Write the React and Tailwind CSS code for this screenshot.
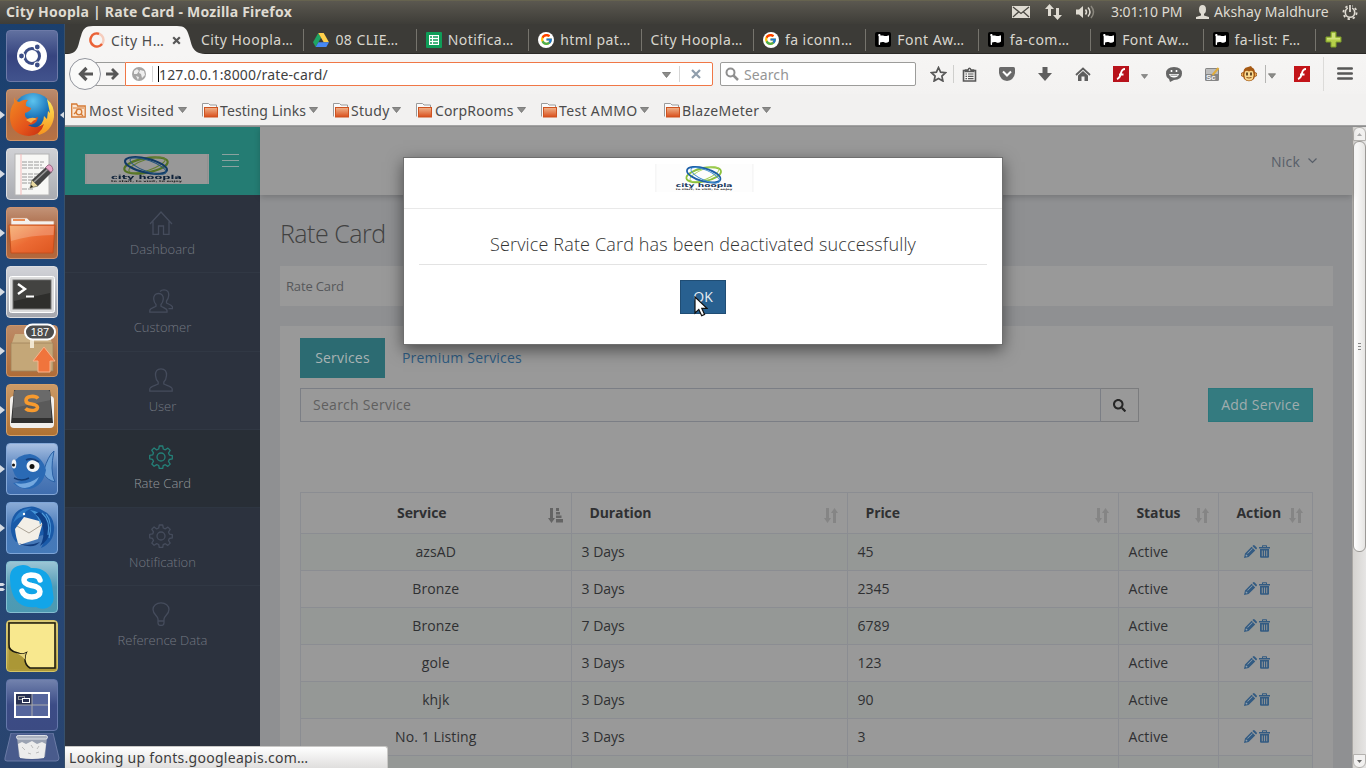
import React from "react";
import { FcGoogle } from "react-icons/fc";
import { FaFlag, FaSearch } from "react-icons/fa";

/* ---------- shared bits ---------- */

function Caret({ className = "" }) {
  return (
    <svg width="9" height="6" viewBox="0 0 9 6" className={className}>
      <path d="M.5 .5h8L4.5 5.5z" fill="#8d8d8b" stroke="#6f6f6d" strokeWidth=".8" />
    </svg>
  );
}

function Logo({ className }) {
  return (
    <svg viewBox="0 0 124 30" preserveAspectRatio="none" className={className}>
      <rect width="124" height="30" fill="#fdfdfd" />
      <path d="M1 0V30M122.5 0V30" stroke="#f2f2f2" />
      <g fill="none">
        <ellipse cx="61" cy="11.500" rx="22" ry="7.200" transform="rotate(-10 61 11.500)" stroke="#8cc03c" strokeWidth="2.200" />
        <ellipse cx="62" cy="11" rx="19" ry="5.500" transform="rotate(-18 62 11)" stroke="#a4d158" strokeWidth="1.100" />
        <ellipse cx="61" cy="11.500" rx="21.500" ry="7" transform="rotate(13 61 11.500)" stroke="#1c5fa8" strokeWidth="2.100" />
        <ellipse cx="63" cy="12" rx="19" ry="5.500" transform="rotate(20 63 12)" stroke="#3f8fd0" strokeWidth="1" />
      </g>
      <text x="26" y="25" textLength="71" lengthAdjust="spacingAndGlyphs" fontFamily="DejaVu Sans" fontWeight="700" fontSize="5.600" fill="#17375e">city hoopla</text>
      <text x="26" y="27.800" textLength="71" lengthAdjust="spacingAndGlyphs" fontFamily="DejaVu Sans" fontWeight="700" fontSize="2.400" fill="#222">to start, to visit, to enjoy</text>
    </svg>
  );
}

/* ---------- system panel ---------- */

function SystemPanel() {
  return (
    <div className="flex h-6 shrink-0 items-center border-t border-[#66634f] bg-linear-to-b from-[#5b5850] to-[#3e3d38] pl-1.5 text-[#dfdbd2]">
      <span className="w-[500px] pb-0.5 text-[14px] leading-none font-bold tracking-[0.23px] whitespace-nowrap">City Hoopla | Rate Card - Mozilla Firefox</span>
      <div className="ml-auto flex items-center pb-px">
        <svg width="18" height="12" viewBox="0 0 18 12" className="mr-[15px]">
          <rect width="18" height="12" fill="#dfdbd2" />
          <path d="M1 1l8 6.500L17 1M1 11l5.500-5M17 11l-5.500-5" stroke="#4a4842" strokeWidth="1.300" fill="none" />
        </svg>
        <svg width="17" height="16" viewBox="0 0 17 16" className="mr-3.5" fill="#dfdbd2">
          <path d="M4.500 0L9 5H6v7H3V5H0zM12.500 16L8 11h3V4h3v7h3z" />
        </svg>
        <svg width="20" height="14" viewBox="0 0 20 14" className="mr-[15px]">
          <path d="M0 4.500h3L7 1v12L3 9.500H0z" fill="#dfdbd2" />
          <path d="M9.500 4.500q2 2.500 0 5M12 2.500q4 4.500 0 9" stroke="#dfdbd2" strokeWidth="1.500" fill="none" />
          <path d="M15 1q5 6 0 12" stroke="#8a877e" strokeWidth="1.500" fill="none" />
        </svg>
        <span className="w-[85px] text-[14px] leading-none tracking-[-0.1px] whitespace-nowrap">3:01:10 PM</span>
        <svg width="13" height="14" viewBox="0 0 13 14" fill="#dfdbd2" className="mr-[5px]">
          <ellipse cx="6.500" cy="4.500" rx="3.500" ry="4.500" />
          <path d="M5 8h3v2.500l5 1.500v2H0v-2l5-1.500z" />
        </svg>
        <span className="w-[128px] text-[14px] leading-none tracking-[0.06px] whitespace-nowrap">Akshay Maldhure</span>
        <svg width="16" height="16" viewBox="0 0 16 16" className="mr-2" fill="none" stroke="#dfdbd2">
          <circle cx="8" cy="8.500" r="4.700" strokeWidth="1.600" />
          <circle cx="8" cy="8.500" r="6.600" strokeWidth="1.800" strokeDasharray="2.400 2.784" />
          <path d="M8 0v8" strokeWidth="4" stroke="#4c4a44" />
          <path d="M8 1v7" strokeWidth="1.800" />
        </svg>
      </div>
    </div>
  );
}

/* ---------- launcher ---------- */

function UbuntuIcon() {
  return (
    <g>
      <circle cx="26" cy="26" r="15" fill="#fff" />
      <circle cx="26" cy="26" r="7.500" fill="none" stroke="#3c4d86" strokeWidth="3" />
      <g fill="#3c4d86" stroke="#fff" strokeWidth="1.200">
        <circle cx="15.500" cy="26" r="3" />
        <circle cx="31.300" cy="17" r="3" />
        <circle cx="31.300" cy="35" r="3" />
      </g>
    </g>
  );
}

function FirefoxIcon() {
  return (
    <g>
      <defs>
        <radialGradient id="ffGlobe" cx=".5" cy=".2" r=".8"><stop offset="0" stopColor="#5cc3ee" /><stop offset=".5" stopColor="#1e78bd" /><stop offset="1" stopColor="#123a80" /></radialGradient>
        <linearGradient id="ffFox" x1="0" y1="0" x2="1" y2="1"><stop offset="0" stopColor="#f28b22" /><stop offset=".6" stopColor="#e4541b" /><stop offset="1" stopColor="#c52d10" /></linearGradient>
        <linearGradient id="ffTail" x1="0" y1="0" x2="0" y2="1"><stop offset="0" stopColor="#ffe95c" /><stop offset="1" stopColor="#f7941d" /></linearGradient>
      </defs>
      <circle cx="27" cy="24" r="20" fill="url(#ffGlobe)" />
      <path d="M41 10q8 7 7 18-2 14-15 18l-5-6q10-4 10-13l3 3 1-8 2 2z" fill="url(#ffTail)" />
      <path d="M8 8q1 4 5 5 5-3 9-2-3 3-2 6l5 2q0 3-6 5-1 5 4 6 5 0 9-2-1 8-10 8 8 5 16-1-3 11-15 12Q5 46 4 29 4 18 8 14z" fill="url(#ffFox)" />
      <path d="M20 31q6-4 11-1-4 1-6 4z" fill="#f9b04a" />
    </g>
  );
}

function EditorIcon() {
  return (
    <g>
      <rect x="9" y="6" width="34" height="41" fill="#f7f7f5" stroke="#b4b4b4" />
      <path d="M15 6v41" stroke="#f3b9b9" />
      <path d="M16 14h22M16 17h20M16 20h22M16 26h18M16 29h21M16 32h17M16 35h19M16 41h12" stroke="#9a9a9a" strokeWidth="1" strokeDasharray="5 1" />
      <path d="M24 40l2-8 6 6z" fill="#ead9a0" stroke="#55553a" strokeWidth=".6" />
      <path d="M26 32L40 19l6 5L32 38z" fill="#444" />
      <path d="M28 34L42 21" stroke="#999" strokeWidth="1.500" />
      <path d="M39.500 19.500l2.500-2.500q4-1 5 5l-2 2.500z" fill="#e8a6c8" stroke="#8d5a77" strokeWidth=".8" />
      <path d="M24 40l1.500-3 1.500 1.800z" fill="#222" />
    </g>
  );
}

function FilesIcon() {
  return (
    <g>
      <defs><linearGradient id="fold" x1="0" y1="0" x2="1" y2="1"><stop offset="0" stopColor="#f5a25a" /><stop offset=".5" stopColor="#ec6b34" /><stop offset="1" stopColor="#dd5620" /></linearGradient></defs>
      <path d="M5 11h16l3 3h24v8H5z" fill="#f4f1ee" stroke="#c98d6c" strokeWidth=".7" />
      <path d="M7 13h12" stroke="#e98d55" strokeWidth="2" />
      <path d="M3 18h46l-2 28H5z" fill="url(#fold)" stroke="#c64f1c" />
      <path d="M4 19h44l-.5 9Q24 28 5 34z" fill="#fff" opacity=".22" />
    </g>
  );
}

function TerminalIcon() {
  return (
    <g>
      <rect x="3.500" y="10.500" width="45" height="36" rx="2" fill="#dcdcdc" stroke="#fff" />
      <rect x="7" y="14" width="38" height="29" fill="#2e2e2c" stroke="#777" />
      <path d="M8 15h36v12L8 35z" fill="#fff" opacity=".1" />
      <path d="M12 18l7 5-7 5" stroke="#fff" strokeWidth="2.400" fill="none" />
      <path d="M20 30.500h8" stroke="#fff" strokeWidth="2" />
    </g>
  );
}

function UpdaterIcon() {
  return (
    <g>
      <path d="M9 9h34l3 9H6z" fill="#cbb083" />
      <path d="M5 18h42v28H5z" fill="#c4a778" stroke="#a1845a" strokeWidth=".8" />
      <path d="M24 9h4v14h-4z" fill="#f0e6d0" />
      <path d="M38 22l11 14h-5v11H32V36h-5z" fill="#f0743c" stroke="#f8b28c" />
      <rect x="19" y="-.500" width="30" height="15" rx="7.500" fill="#4d4d4d" stroke="#fff" strokeWidth="2" />
      <text x="34" y="11" textAnchor="middle" fontFamily="Liberation Sans" fontSize="11" fill="#fff">187</text>
    </g>
  );
}

function SublimeIcon() {
  return (
    <g>
      <rect x="4" y="12" width="44" height="32" rx="4" fill="#f1efec" />
      <path d="M8 6h36l3 33H5z" fill="#2f2f2f" />
      <path d="M10 6h32q2 0 2 2l1.500 26H6.500L8 8q0-2 2-2z" fill="#5a5a5a" />
      <path d="M10 6h32q2 0 2 2l.500 8L7.500 24V8q.500-2 2.500-2z" fill="#fff" opacity=".1" />
      <path d="M32 14.500q-2-2.500-7-2-5 .5-5 4 0 3 5.500 3.500 6 1 6 3.500-.5 3-5.500 3-4.500 0-6.500-2" stroke="#f79a2e" strokeWidth="3.600" fill="none" />
    </g>
  );
}

function BluefishIcon() {
  return (
    <g>
      <path d="M38 27q4-14 10-19-2 10-2 17 0 8 3 14-8-2-11-8z" fill="#6fa2d8" stroke="#2b62a6" />
      <path d="M6 22q6-11 18-11 12 2 16 16-3 17-17 19-10 0-16-6 5 0 8-3-8-3-9-15z" fill="#2a6ab5" />
      <path d="M9 40q12 3 24-6-4 10-14 11-6 0-10-5z" fill="#74a8df" />
      <path d="M8 35q8 4 15 0" stroke="#123c77" strokeWidth="1.500" fill="none" />
      <ellipse cx="27" cy="23" rx="6.500" ry="6" fill="#f4f6f8" />
      <circle cx="26" cy="23.500" r="2.500" fill="#111" />
      <ellipse cx="8" cy="21" rx="2.300" ry="4.500" fill="#f4f6f8" />
      <circle cx="7.500" cy="22" r="1.500" fill="#111" />
      <path d="M20 17q6-3 13 2" stroke="#173f7b" strokeWidth="1.800" fill="none" />
    </g>
  );
}

function ThunderbirdIcon() {
  return (
    <g>
      <path d="M5 24Q6 7 22 5q6-2 14 3 11 5 12 16 1 16-13 22 5-8 2-13L10 40q-6-7-5-16z" fill="#1a5aa8" />
      <path d="M9 27l9-12 19 5-5 17-19 6q-3-6-4-16z" fill="#f3efe7" />
      <path d="M11 24l12 7 14-9" stroke="#aaa295" fill="none" />
      <path d="M7 21Q12 6 26 6q-8 3-8 8-6 1-11 7z" fill="#2f7ac4" />
      <path d="M24 8q10 1 14 9l-4 6q-1-9-10-15z" fill="#4796d8" />
      <path d="M33 10q13 6 11 20-2 9-10 14 5-9 3-18-1-9-8-14z" fill="#0e3f86" />
      <path d="M36 11q9 8 6 22M40 12q7 9 3 24" stroke="#4f9bda" strokeWidth="1.200" fill="none" />
      <circle cx="18" cy="12" r="1.200" fill="#fff" />
      <path d="M12 41q10 4 22-1-7 8-22 1z" fill="#143d7c" />
    </g>
  );
}

function SkypeIcon() {
  return (
    <g>
      <path d="M4 18Q3 5 17 4q5 0 8 3 18-1 21 17l1 8q3 11-6 15-6 2-11-1Q11 48 6 31 4 25 4 18z" fill="#12a5e8" />
      <path d="M34 19q-1-5-9-5-7 .5-7 5 0 4 7.500 5.500 8.500 1.500 8.500 6 0 5-8 5.500-8 0-10-6" fill="none" stroke="#fff" strokeWidth="5.500" strokeLinecap="round" />
    </g>
  );
}

function NotesIcon() {
  return (
    <g>
      <path d="M2 2h47v47H3z" fill="#ab9736" />
      <path d="M3 3h46v45H24q-5-3-5-9 0-4 1-6-4 2-8 0Q2 31 3 24z" fill="#f8e88e" stroke="#1d1b10" strokeWidth="1.600" />
      <path d="M10 33q6 2 10 0-2 4 0 8-3-5-10-8z" fill="#e5d47b" />
    </g>
  );
}

function WorkspaceIcon() {
  return (
    <g>
      <rect x="9" y="14" width="34" height="24" fill="#55659c" stroke="#fff" strokeWidth="2" />
      <rect x="10" y="15" width="16" height="11" fill="#293152" />
      <path d="M26 15v22M10 26h32" stroke="#aaa" />
      <rect x="12.500" y="17.500" width="6" height="3" fill="none" stroke="#999" />
      <rect x="16.500" y="19.500" width="7" height="4" fill="#293152" stroke="#fff" />
    </g>
  );
}

const launcher = [
  { Icon: UbuntuIcon, bg: "bg-linear-to-b from-[#61709f] via-[#36447f] to-[#42538d] border-[#6d7aa8]" },
  { Icon: FirefoxIcon, bg: "bg-linear-to-b from-[#bb8b6d] via-[#a86d4b] to-[#b87243] border-[#d0966c]", run: true, focus: true },
  { Icon: EditorIcon, bg: "bg-linear-to-b from-[#d0d1d5] to-[#aaacb1] border-[#dedfe2]", run: true },
  { Icon: FilesIcon, bg: "bg-linear-to-b from-[#c29276] via-[#a4613d] to-[#b4683c] border-[#cf9370]", run: true },
  { Icon: TerminalIcon, bg: "bg-linear-to-b from-[#d2d3d8] to-[#a5a7ae] border-[#dcdde1]", run: true },
  { Icon: UpdaterIcon, bg: "bg-linear-to-b from-[#bd8b66] to-[#af6c38] border-[#cc956a]", run: true },
  { Icon: SublimeIcon, bg: "bg-linear-to-b from-[#cc9a66] to-[#b07233] border-[#d5a069]", run: true },
  { Icon: BluefishIcon, bg: "bg-linear-to-b from-[#a8c0e2] via-[#5581bd] to-[#3f6dae] border-[#85a8d8]", run: true },
  { Icon: ThunderbirdIcon, bg: "bg-linear-to-b from-[#8aabd6] via-[#4678b8] to-[#457ab9] border-[#7ea5d8]", run: true },
  { Icon: SkypeIcon, bg: "bg-linear-to-b from-[#9bc5d5] via-[#4f9bb7] to-[#4c9ab2] border-[#85bfd1]", run: true, two: true },
  { Icon: NotesIcon, bg: "bg-linear-to-b from-[#d9cb7d] to-[#ad9838] border-[#d6c566]" },
  { Icon: WorkspaceIcon, bg: "bg-linear-to-b from-[#7282ad] via-[#3c4c86] to-[#3c4b83] border-[#6577aa]" },
];

function Launcher() {
  return (
    <nav className="flex w-[65px] shrink-0 flex-col gap-[7px] border-r border-[#38506a] bg-linear-to-b from-[#1b3f6d] via-[#234a7c] to-[#29446f] pt-1.5">
      {launcher.map(({ Icon, bg, run, focus, two }, i) => (
        <div key={i} className="flex h-[52px] shrink-0 items-center">
          <div className="flex w-1.5 shrink-0 flex-col gap-0.5">
            {run && !two && <svg width="5" height="8" viewBox="0 0 5 8"><path d="M0 0l5 4-5 4z" fill="#d5dbe3" /></svg>}
            {two && <svg width="5" height="8" viewBox="0 0 5 8"><path d="M0 0h3l2 1.500L3 3H0zM0 5h3l2 1.500L3 8H0z" fill="#d5dbe3" /></svg>}
          </div>
          <div className={"h-[52px] w-[52px] shrink-0 rounded-[4px] border " + bg}>
            <svg width="50" height="50" viewBox="1 1 50 50" className="overflow-visible"><Icon /></svg>
          </div>
          {focus && <svg width="5" height="8" viewBox="0 0 5 8" className="ml-0.5"><path d="M5 0L0 4l5 4z" fill="#d5dbe3" /></svg>}
        </div>
      ))}
      <svg width="56" height="29" viewBox="0 0 56 29" className="-mt-[5px] ml-1 shrink-0">
        <path d="M7 0h42l6 25q0 3-3 3H3q-3 0-2-3z" fill="#495b8c" stroke="#6b7ba6" />
        <path d="M13 4h30l-2 20H15z" fill="#9aa2b2" />
        <path d="M14 11l4-2 4 2 6-3 5 3 5-2 4 2-2 14q-12 2-24 0z" fill="#ececec" />
        <path d="M18 14l3 3M27 12l2 3M24 20l3 1M35 13l-2 3M32 20l3-1" stroke="#bcbcbc" fill="none" />
        <rect x="12.500" y="2.500" width="31" height="3.500" rx="1.700" fill="#aab1be" stroke="#dde1e8" />
      </svg>
    </nav>
  );
}

/* ---------- browser chrome ---------- */

function DriveIcon() {
  return (
    <svg width="16" height="14" viewBox="0 0 16 14">
      <path d="M5.300 0L8 4.700 2.700 14 0 9.300z" fill="#1fa463" />
      <path d="M5.300 0h5.400L16 9.300h-5.300z" fill="#ffd04b" />
      <path d="M5.400 9.300H16L13.300 14H2.700z" fill="#4688f4" />
    </svg>
  );
}

function SheetIcon() {
  return (
    <svg width="16" height="16" viewBox="0 0 16 16">
      <rect width="16" height="16" rx="1" fill="#0f9d58" />
      <rect x="3" y="3" width="10" height="10" fill="#fff" />
      <path d="M4 5h2M7 5h5M4 8h2M7 8h5M4 11h2M7 11h5" stroke="#0f9d58" strokeWidth="1.500" />
    </svg>
  );
}

function GoogleIcon() {
  return (
    <span className="flex h-4 w-4 items-center justify-center rounded-full bg-white"><FcGoogle size={13} /></span>
  );
}

function FlagIcon() {
  return (
    <span className="flex h-[15px] w-4 items-center justify-center rounded-[2px] bg-black"><FaFlag size={11} color="#fff" /></span>
  );
}

const tabs = [
  { label: "City Hoopla…" },
  { label: "08 CLIE…", Icon: DriveIcon },
  { label: "Notifica…", Icon: SheetIcon },
  { label: "html pat…", Icon: GoogleIcon },
  { label: "City Hoopla…" },
  { label: "fa iconn…", Icon: GoogleIcon },
  { label: "Font Aw…", Icon: FlagIcon },
  { label: "fa-com…", Icon: FlagIcon },
  { label: "Font Aw…", Icon: FlagIcon },
  { label: "fa-list: F…", Icon: FlagIcon },
];

function TabStrip() {
  return (
    <div className="flex h-[30px] shrink-0 border-b border-[#2b2a27] bg-[#3c3b37]">
      <div className="relative h-[30px] w-[127px] shrink-0">
        <svg width="140" height="30" viewBox="0 0 140 30" className="absolute top-0 left-0 z-10">
          <path d="M3 30C14 29 13 20 16 12 18 5 20 2 28 2h84c8 0 10 3 12 10 3 8 2 17 16 18z" fill="#f6f5f4" />
        </svg>
        <div className="relative z-20 flex h-full items-center pt-0.5 pl-6">
          <svg width="16" height="16" viewBox="0 0 16 16" fill="none" strokeWidth="2.400">
            <circle cx="8" cy="8" r="6.500" stroke="#f6cdbd" />
            <path d="M13 12A6.500 6.500 0 1 1 10 1.800" stroke="#ea6237" />
          </svg>
          <span className="ml-1.5 w-[61px] text-[14px] tracking-[0.5px] whitespace-nowrap text-[#4c4c4c]">City H…</span>
          <svg width="9" height="9" viewBox="0 0 9 9"><path d="M1.200 1.200l6.600 6.600M7.800 1.200L1.200 7.800" stroke="#575757" strokeWidth="2.200" /></svg>
        </div>
      </div>
      {tabs.map(({ label, Icon }, i) => (
        <div key={i} className="flex w-[112.4px] shrink-0 items-center gap-1.5 pt-0.5 pl-[9px]">
          {Icon && <Icon />}
          <span className="grow text-[14px] tracking-[0.45px] whitespace-nowrap text-[#d9d6ce]">{label}</span>
          <span className="h-[22px] w-px bg-[#76746d]" />
        </div>
      ))}
      <svg width="17" height="17" viewBox="0 0 17 17" className="mt-[7px] ml-[9px]">
        <path d="M6 1h5v5h5v5h-5v5H6v-5H1V6h5z" fill="#b5cf4a" stroke="#7e9f2a" />
        <path d="M7 2h3v5h5v1.500H2V7h5z" fill="#dbe88f" opacity=".7" />
      </svg>
    </div>
  );
}

function Slot({ className, children }) {
  return <div className={"flex shrink-0 items-center justify-center " + className}>{children}</div>;
}

function FlashIcon({ className }) {
  return (
    <svg width="16" height="16" viewBox="0 0 16 16">
      <rect width="16" height="16" className={className} />
      <path d="M12 3q-3 0-4 4-1 5-4 6M6 8.500h4.500" stroke="#fff" strokeWidth="1.900" fill="none" />
    </svg>
  );
}

function NavBar() {
  return (
    <div className="flex h-10 shrink-0 items-center bg-linear-to-b from-[#f6f5f4] to-[#f3f2f1]">
      <div className="z-10 ml-1 flex h-8 w-8 shrink-0 items-center justify-center rounded-full border border-[#92959d] bg-[#fafaf9]">
        <svg width="15" height="16" viewBox="0 0 15 16"><path d="M8.500 2L2.500 8l6 6M2.500 8H15" stroke="#575757" strokeWidth="3.200" fill="none" /></svg>
      </div>
      <div className="-ml-3 flex h-6 w-9 shrink-0 items-center justify-end border border-r-0 border-[#9b9b99] bg-[#f7f6f5] pr-1.5">
        <svg width="13" height="14" viewBox="0 0 13 14"><path d="M6 2l5 5-5 5M11 7H0" stroke="#575757" strokeWidth="2.800" fill="none" /></svg>
      </div>
      <div className="flex h-6 w-[588px] shrink-0 items-center rounded-r-[2px] border border-[#f07746] bg-white pl-1.5">
        <svg width="14" height="14" viewBox="0 0 14 14">
          <circle cx="7" cy="7" r="7" fill="#a5a5a5" />
          <path d="M2 4l3-2 2 2-2 3-3 0zM8 3l4 1 1 4-3 3-1-4-2-1zM4 9l3 1-1 3z" fill="#efefef" />
        </svg>
        <span className="ml-1.5 h-4 w-px bg-[#d6d6d6]" />
        <span className="ml-[5px] h-4 w-px bg-black" />
        <span className="grow pt-0.5 text-[14px] leading-none tracking-[0.15px] whitespace-nowrap text-[#3f3f3f]">127.0.0.1:8000/rate-card/</span>
        <Caret className="mt-0.5" />
        <span className="ml-2 h-4 w-px bg-[#d6d6d6]" />
        <svg width="10" height="10" viewBox="0 0 10 10" className="mr-[11px] ml-[11px]"><path d="M1 1l8 8M9 1L1 9" stroke="#8f9dab" strokeWidth="2.200" /></svg>
      </div>
      <div className="ml-[7px] flex h-6 w-[196px] shrink-0 items-center rounded-[2px] border border-[#9c9c9a] bg-white pl-1">
        <svg width="14" height="14" viewBox="0 0 14 14" fill="none" stroke="#8f8f8f"><circle cx="5.500" cy="5.500" r="4" strokeWidth="2" /><path d="M8.500 8.500l4.500 4.500" strokeWidth="2.500" /></svg>
        <span className="ml-[5px] pt-0.5 text-[14px] leading-none tracking-[0.1px] text-[#959595]">Search</span>
      </div>
      <Slot className="ml-[7px] w-[30px]">
        <svg width="17" height="16" viewBox="0 0 17 16"><path d="M8.500 1.500l2.100 4.600 5 .6-3.700 3.400 1 4.900-4.400-2.500L4.100 15l1-4.900L1.400 6.700l5-.6z" fill="none" stroke="#575757" strokeWidth="1.700" /></svg>
      </Slot>
      <span className="h-[18px] w-px bg-[#cfcfcd]" />
      <Slot className="w-[30px]">
        <svg width="15" height="15" viewBox="0 0 15 15"><path d="M3.500 3.500h-2V14h12V3.500h-2M3.500 4.500h8V3h-2.500Q7.500-.5 6 3H3.500z" fill="none" stroke="#575757" strokeWidth="1.600" /><path d="M3.500 7h1.500M6 7h5.500M3.500 9.300h1.500M6 9.300h5.500M3.500 11.600h1.500M6 11.600h5.500" stroke="#575757" strokeWidth="1.200" /></svg>
      </Slot>
      <Slot className="w-[46px]">
        <svg width="16" height="14" viewBox="0 0 16 14"><path d="M1.500 0h13Q16 0 16 1.500V6q-1 7-8 8-7-1-8-8V1.500Q0 0 1.500 0z" fill="#6a6a6a" /><path d="M4 4.500l4 4 4-4" stroke="#fff" strokeWidth="2" fill="none" /></svg>
      </Slot>
      <Slot className="w-[30px]">
        <svg width="14" height="14" viewBox="0 0 14 14"><path d="M4.500 0h5v6H14l-7 8-7-8h4.500z" fill="#5e5e5e" /></svg>
      </Slot>
      <Slot className="w-[46px]">
        <svg width="16" height="14" viewBox="0 0 16 14"><path d="M1 8l7-6.500L15 8" stroke="#5e5e5e" strokeWidth="1.800" fill="none" /><path d="M3 8.500L8 4l5 4.500V14H9.500V9.500h-3V14H3z" fill="#5e5e5e" /></svg>
      </Slot>
      <Slot className="w-[30px]"><FlashIcon className="fill-[#b8121b]" /></Slot>
      <Slot className="w-4 pt-1"><Caret className="h-[5px] w-[7px]" /></Slot>
      <Slot className="w-11">
        <svg width="16" height="15" viewBox="0 0 16 15"><path d="M8 0q8 0 8 6.500T8 13l-4 2-1-3Q0 10.500 0 6.500 0 0 8 0z" fill="#666" /><path d="M5.500 3v2M10.500 3v2" stroke="#fff" strokeWidth="1.600" /><path d="M3 7h10q-1 3.500-5 3.500T3 7z" fill="#fff" /><path d="M4.500 8.200h7" stroke="#666" strokeWidth=".8" /></svg>
      </Slot>
      <Slot className="w-8">
        <svg width="15" height="15" viewBox="0 0 15 15"><rect y="1" width="14" height="13" rx="1.500" fill="#858585" /><path d="M1 2h12v5H1z" fill="#bdbdbd" /><text x="1" y="12.500" fontFamily="Liberation Sans" fontWeight="700" fontSize="8" fill="#f2f2f2">Sc</text><path d="M7.500 8L13.500 1" stroke="#e0ac3b" strokeWidth="2" /></svg>
      </Slot>
      <Slot className="ml-[5px] w-8">
        <svg width="16" height="16" viewBox="0 0 16 16"><circle cx="2" cy="8.500" r="1.900" fill="#f0b45e" stroke="#8e4a12" strokeWidth=".8" /><circle cx="14" cy="8.500" r="1.900" fill="#f0b45e" stroke="#8e4a12" strokeWidth=".8" /><path d="M3 3.500q1-2.500 4-2.500l3-1 1 1.500q2 .5 2.500 2.500 1.500 5-.5 9-5 4.500-10 0-2-4 0-9.500z" fill="#a65a14" /><path d="M4 5.500q2-1.500 4 0 2-1.500 4 0 1.500 4-.2 7.500-3.800 3-7.600 0-1.700-3.500-.2-7.500z" fill="#f9d88e" /><path d="M6 6.500v3M10 6.500v3" stroke="#3a2008" strokeWidth="1.500" /><path d="M5.500 11.500q2.500 1 5 0" stroke="#8e4a12" fill="none" /></svg>
      </Slot>
      <span className="h-[18px] w-px bg-[#b5b5b3]" />
      <Slot className="w-3 pt-1"><Caret className="h-[6px] w-[8px]" /></Slot>
      <Slot className="ml-[3px] w-[42px]"><FlashIcon className="fill-[#c31419]" /></Slot>
      <span className="h-[34px] w-px bg-[#dcdbd9]" />
      <Slot className="w-[42px]">
        <svg width="16" height="14" viewBox="0 0 16 14"><path d="M1.200 1.500h13.600M1.200 6.500h13.600M1.200 11.500h13.600" stroke="#575757" strokeWidth="2.400" strokeLinecap="round" /></svg>
      </Slot>
    </div>
  );
}

function FolderIcon() {
  return (
    <svg width="16" height="15" viewBox="0 0 16 15">
      <defs><linearGradient id="bmFolder" x1="0" y1="0" x2="0" y2="1"><stop offset="0" stopColor="#f0b48c" /><stop offset="1" stopColor="#d94e1b" /></linearGradient></defs>
      <path d="M.5 13.500V.5h6l1.500 1.500h6.500v3" fill="#fafafa" stroke="#9b9b9b" />
      <rect x="2.500" y="4.500" width="13" height="9.500" fill="url(#bmFolder)" stroke="#ce5320" />
    </svg>
  );
}

function MostVisitedIcon() {
  return (
    <svg width="15" height="15" viewBox="0 0 15 15" fill="none" stroke="#d57a34">
      <path d="M.7 14V1h5l1 2h7.500v11z" fill="#fbe7d4" strokeWidth="1.300" />
      <path d="M2 5h11" />
      <circle cx="8" cy="9" r="2.800" strokeWidth="1.300" />
      <path d="M10 11l2 2M3 11l3-3" strokeWidth="1.300" />
    </svg>
  );
}

const bookmarks = [
  { label: "Most Visited", item: "w-[131px]", text: "w-[89px] ml-[3px] tracking-[0.4px]", Icon: MostVisitedIcon },
  { label: "Testing Links", item: "w-[131px]", text: "w-[89px] ml-0.5 tracking-[0.1px]", Icon: FolderIcon },
  { label: "Study", item: "w-[83px]", text: "w-[41px] ml-0.5 tracking-[0.3px]", Icon: FolderIcon },
  { label: "CorpRooms", item: "w-[125px]", text: "w-[82px] ml-[3px] tracking-[0.15px]", Icon: FolderIcon },
  { label: "Test AMMO", item: "w-[123px]", text: "w-[81px] ml-0.5 tracking-[0.35px]", Icon: FolderIcon },
  { label: "BlazeMeter", item: "w-[123px]", text: "w-[80px] ml-0.5 tracking-[0.3px]", Icon: FolderIcon },
];

function BookmarksBar() {
  return (
    <div className="flex h-8 shrink-0 items-center border-b border-[#a3a3a3] bg-[#f2f1f0] pt-px pl-1.5">
      {bookmarks.map(({ label, item, text, Icon }) => (
        <div key={label} className={"flex shrink-0 items-center " + item}>
          <Icon />
          <span className={"shrink-0 pt-px text-[14px] leading-none whitespace-nowrap text-[#4c4c4c] " + text}>{label}</span>
          <Caret />
        </div>
      ))}
    </div>
  );
}

/* ---------- application page ---------- */

const gearPath = "M10.300 1h3.400l.6 3 2 .8 2.600-1.700 2.300 2.300-1.700 2.600.9 2.100 2.900.5v3.300l-3 .6-.8 2 1.700 2.600-2.400 2.300-2.500-1.700-2.100.9-.5 2.900h-3.400l-.6-3-2-.9-2.600 1.700-2.300-2.300 1.700-2.600-.9-2-2.900-.6v-3.400l3-.5.8-2.100-1.700-2.500 2.300-2.400L7.700 4.900l2-.9z";

const Gear = () => (<><path d={gearPath} strokeLinejoin="round" /><circle cx="12" cy="12" r="4" /></>);
const Home = () => <path d="M1 13L12 1l11 12M4 10.500V23.500h5.500V15h5v8.500H20V10.500" />;
const User = () => <path d="M12 .8c4 0 5.800 2.700 5.500 6.700-.2 3-1.200 5.200-2.700 6.500v2c2.500 1.500 8.400 2.500 8.400 5v2.200H.8V21c0-2.500 5.900-3.500 8.400-5v-2C7.700 12.700 6.700 10.500 6.500 7.500 6.200 3.500 8 .8 12 .8z" />;
const Users = () => (
  <>
    <path d="M9.500 4.500c3.500 0 5 2.300 4.800 5.500-.2 2.600-1 4.300-2.300 5.500v1.700c2 1.300 6 2 6 4.300v1.700H.8v-1.700c0-2.300 4.200-3 6.200-4.300v-1.700C5.700 14.300 4.900 12.600 4.700 10c-.2-3.200 1.300-5.500 4.800-5.500z" />
    <path d="M11 2.500C12 1.400 13.500.8 15 .8c3.500 0 5 2.500 4.700 5.700-.2 2.500-1 4.300-2.200 5.500v2c2 1.200 6 2 6 4.200v1.500h-4" />
  </>
);
const Bulb = () => <path d="M9 17c0-3-5-4.500-5-9.500C4 3.500 7.500.8 12 .8s8 2.700 8 6.700c0 5-5 6.500-5 9.500M9 19v2q0 2.500 3 2.500t3-2.500v-4M9 17v3M9 19h6" />;

const menu = [
  { label: "Dashboard", Icon: Home },
  { label: "Customer", Icon: Users },
  { label: "User", Icon: User },
  { label: "Rate Card", Icon: Gear, active: true },
  { label: "Notification", Icon: Gear },
  { label: "Reference Data", Icon: Bulb },
];

function Sidebar() {
  return (
    <aside className="flex w-[195px] shrink-0 flex-col bg-[#2c323e]">
      <div className="flex h-[68px] shrink-0 items-start bg-[#247c73] pt-[27px] pl-5">
        <Logo className="h-[30px] w-[124px] brightness-[.6]" />
        <div className="ml-[13px] flex w-[17px] flex-col gap-[5px]">
          <span className="h-px bg-[#8ba29f]" />
          <span className="h-px bg-[#8ba29f]" />
          <span className="h-px bg-[#8ba29f]" />
        </div>
      </div>
      {menu.map(({ label, Icon, active }) => (
        <div key={label} className={"flex h-[78.300px] shrink-0 flex-col items-center border-b " + (active ? "border-[#2e3642] bg-[#282e36] pt-[15px]" : label === "Reference Data" ? "border-transparent pt-4" : "border-[#313844] pt-4")}>
          <svg width="24" height="24" viewBox="0 0 24 24" fill="none" strokeWidth="1.300" className={"mr-[3px] " + (active ? "stroke-[#248078]" : "stroke-[#454c5c]")}><Icon /></svg>
          <span className={"mt-[5px] text-[13px] leading-[19px] font-light " + (active ? "text-[#94979a]" : "text-[#727780]")}>{label}</span>
        </div>
      ))}
    </aside>
  );
}

function SortIcon({ active }) {
  return (
    <svg width="15" height="15" viewBox="0 0 15 15" className={active ? "fill-[#646464]" : "fill-[#858585]"}>
      <path d="M2 0h3v10h2L3.500 15 0 10h2z" />
      {active ? <path d="M8 0h3v3H8zM8 4h4v2.500H8zM8 7.500h5.500V10H8zM8 11h7v3.500H8z" /> : <path d="M9 15h3V5h2L10.500 0 7 5h2z" />}
    </svg>
  );
}

function PencilIcon() {
  return (
    <svg width="13" height="13" viewBox="0 0 13 13" className="shrink-0 fill-[#335b82]">
      <path d="M0 13l1-4.600L7.600 1.800l3.600 3.600L4.600 12zM8.400 1L9 .4q.8-.7 1.700.1l1.800 1.800q.8.900.1 1.700l-.6.6z" />
      <path d="M2 9.200l1.800 1.800-1.600.4-.6-.6zM3.200 8.300l5-5 .5.5-5 5z" fill="#8fa0ae" />
    </svg>
  );
}

function TrashIcon() {
  return (
    <svg width="11" height="13" viewBox="0 0 11 13" className="shrink-0 fill-[#335b82]">
      <path fillRule="evenodd" d="M3 2V.8Q3 .2 3.600.2h3.800Q8 .2 8 .8V2h3v1.500H0V2zM4 2h3v-.8H4zM1 4h9v7.700q0 1.100-1.100 1.100H2.100Q1 12.800 1 11.700zM2.800 5.500v5.800h.9V5.500zM5.050 5.500v5.800h.9V5.500zM7.300 5.500v5.800h.9V5.500z" />
    </svg>
  );
}

const cols = "grid grid-cols-[270.500px_276px_271px_100px_94px]";

const rows = [
  ["azsAD", "3 Days", "45"],
  ["Bronze", "3 Days", "2345"],
  ["Bronze", "7 Days", "6789"],
  ["gole", "3 Days", "123"],
  ["khjk", "3 Days", "90"],
  ["No. 1 Listing", "3 Days", "3"],
  ["", "", ""],
];

function HeadCell({ children, active, className = "pl-[18px]" }) {
  return (
    <div className="flex items-center border-r border-[#8b8d92] pr-2">
      <span className={"grow pb-0.5 font-bold tracking-[-0.1px] " + className}>{children}</span>
      <span className="mt-1 shrink-0"><SortIcon active={active} /></span>
    </div>
  );
}

function Cell({ children, className = "pl-2.5" }) {
  return <div className={"flex items-center border-r border-[#8b8d92] pb-0.5 " + className}>{children}</div>;
}

function RateTable() {
  return (
    <div className="mt-[70px] w-[1013px] border-t border-l border-[#8b8d92] text-[14px] text-[#2f3032]">
      <div className={"h-[41px] border-b border-[#8b8d92] " + cols}>
        <HeadCell active className="pr-[5px] text-center">Service</HeadCell>
        <HeadCell>Duration</HeadCell>
        <HeadCell>Price</HeadCell>
        <HeadCell>Status</HeadCell>
        <HeadCell>Action</HeadCell>
      </div>
      {rows.map(([name, duration, price], i) => (
        <div key={i} className={"h-[37px] border-b border-[#8b8d92] " + cols + (i % 2 === 0 ? " bg-[#959896]" : "")}>
          <Cell className="justify-center tracking-[0.1px]">{name}</Cell>
          <Cell>{duration}</Cell>
          <Cell>{price}</Cell>
          <Cell className="pl-2.5 tracking-[0.15px]">{name && "Active"}</Cell>
          <Cell className="gap-0.5 pl-[25px]">
            {name && <><PencilIcon /><TrashIcon /></>}
          </Cell>
        </div>
      ))}
    </div>
  );
}

function Content() {
  return (
    <main className="flex min-w-0 grow flex-col bg-[#8f9092]">
      <header className="z-10 flex h-[68px] shrink-0 items-center justify-end bg-[#999] pr-[35px] text-[14px] tracking-[0.2px] text-[#575e68] shadow-[0_2px_6px_rgba(0,0,0,0.18)]">
        Nick
        <svg width="9" height="6" viewBox="0 0 9 6" className="ml-2"><path d="M.5.500l4 4 4-4" stroke="#575e68" strokeWidth="1.200" fill="none" /></svg>
      </header>
      <h1 className="mt-5 ml-5 text-[25px] leading-9 font-light tracking-[-0.5px] text-[#414141]">Rate Card</h1>
      <div className="mt-[15px] ml-5 flex h-10 w-[1053px] shrink-0 items-center bg-[#999] pt-0.5 pl-1.5 text-[13px] tracking-[-0.15px] text-[#56585b]">Rate Card</div>
      <section className="mt-5 ml-5 w-[1053px] grow bg-[#999] px-5 pt-3">
        <div className="flex h-10 items-center text-[14px]">
          <span className="flex h-10 w-[85px] items-center justify-center bg-[#2c6b72] pb-0.5 tracking-[0.2px] text-[#a9b3b4]">Services</span>
          <span className="ml-[17px] pb-0.5 tracking-[0.2px] text-[#2f5c82]">Premium Services</span>
        </div>
        <div className="mt-2.5 flex h-[34px] text-[14px]">
          <div className="flex w-[801px] items-center border border-[#7b7e85] pb-0.5 pl-3 tracking-[0.27px] text-[#5f5f5f]">Search Service</div>
          <div className="flex w-[38px] items-center justify-center border border-l-0 border-[#7b7c7e]"><FaSearch size={13} color="#262626" /></div>
          <div className="ml-auto flex w-[105px] items-center justify-center border border-[#2c777c] bg-[#347b80] pb-0.5 tracking-[0.25px] text-[#a0adae]">Add Service</div>
        </div>
        <RateTable />
      </section>
    </main>
  );
}

function Scrollbar() {
  return (
    <div className="flex w-3.5 shrink-0 flex-col items-center border-l border-[#aaa8a5] bg-linear-to-r from-[#d5d3d0] to-[#e6e5e4]">
      <div className="flex h-3.5 w-full shrink-0 items-center justify-center rounded-t-[6px] border border-[#b4b2af] bg-[#f2f1f0]">
        <svg width="5" height="3" viewBox="0 0 5 3"><path d="M0 3L2.500 0 5 3z" fill="#aaa" /></svg>
      </div>
      <div className="flex h-[411px] w-full shrink-0 flex-col items-center justify-center gap-0.5 rounded-[6px] border border-[#9c9a97] bg-linear-to-r from-white to-[#e6e5e3]">
        <span className="h-px w-[3px] bg-[#888]" />
        <span className="h-px w-[3px] bg-[#888]" />
        <span className="h-px w-[3px] bg-[#888]" />
      </div>
      <div className="mt-auto flex h-3.5 w-full shrink-0 items-center justify-center rounded-b-[6px] border border-[#b4b2af] bg-[#f2f1f0]">
        <svg width="5" height="3" viewBox="0 0 5 3"><path d="M0 0h5L2.500 3z" fill="#666" /></svg>
      </div>
    </div>
  );
}

function Modal() {
  return (
    <div className="absolute top-[157px] left-[403px] z-30 flex h-[188px] w-[600px] flex-col border border-[#6f6f6f] bg-white shadow-[0_5px_15px_rgba(0,0,0,0.5)]">
      <div className="flex h-[51px] shrink-0 justify-center border-b border-[#e9e9e9] pt-1.5">
        <Logo className="ml-0.5 h-7 w-[99px]" />
      </div>
      <div className="mx-[15px] flex h-14 items-start justify-center border-b border-[#e3e3e3] pt-[21px] text-[18px] leading-[28px] font-light tracking-[0.155px] whitespace-nowrap text-[#333]">
        Service Rate Card has been deactivated successfully
      </div>
      <div className="mt-[15px] flex h-[34px] w-[46px] items-center justify-center self-center border border-[#204d74] bg-[#286090] pb-0.5 text-[14px] text-[#e8eef3]">OK</div>
    </div>
  );
}

function Cursor() {
  return (
    <svg width="14" height="21" viewBox="0 0 14 21" className="absolute top-[296px] left-[694px] z-40">
      <path d="M1 1v16l3.800-3.600 2.900 6.300 2.900-1.300-2.800-6h5.200z" fill="#fff" stroke="#111" strokeWidth="1.200" />
    </svg>
  );
}

export default function App() {
  return (
    <div className="relative flex h-[768px] w-[1366px] flex-col overflow-hidden font-['Open_Sans','Noto_Sans',sans-serif]">
      <div className="font-['Noto_Sans',sans-serif]"><SystemPanel /></div>
      <div className="flex min-h-0 grow">
        <Launcher />
        <div className="flex min-w-0 grow flex-col">
          <div className="flex flex-col font-['Noto_Sans',sans-serif]">
            <TabStrip />
            <NavBar />
            <BookmarksBar />
          </div>
          <div className="flex min-h-0 grow overflow-hidden border-t border-[#8e8e8e]">
            <Sidebar />
            <Content />
            <Scrollbar />
          </div>
        </div>
      </div>
      <Modal />
      <Cursor />
      <div className="absolute bottom-0 left-[65px] z-30 flex h-[22px] w-[323px] items-center rounded-tr-[3px] border-t border-r border-[#c9c8c6] bg-linear-to-b from-white to-[#dfdedd] pl-1 font-['Noto_Sans',sans-serif] text-[14px] tracking-[0.29px] whitespace-nowrap text-[#3c3c3c]">
        Looking up fonts.googleapis.com…
      </div>
    </div>
  );
}
